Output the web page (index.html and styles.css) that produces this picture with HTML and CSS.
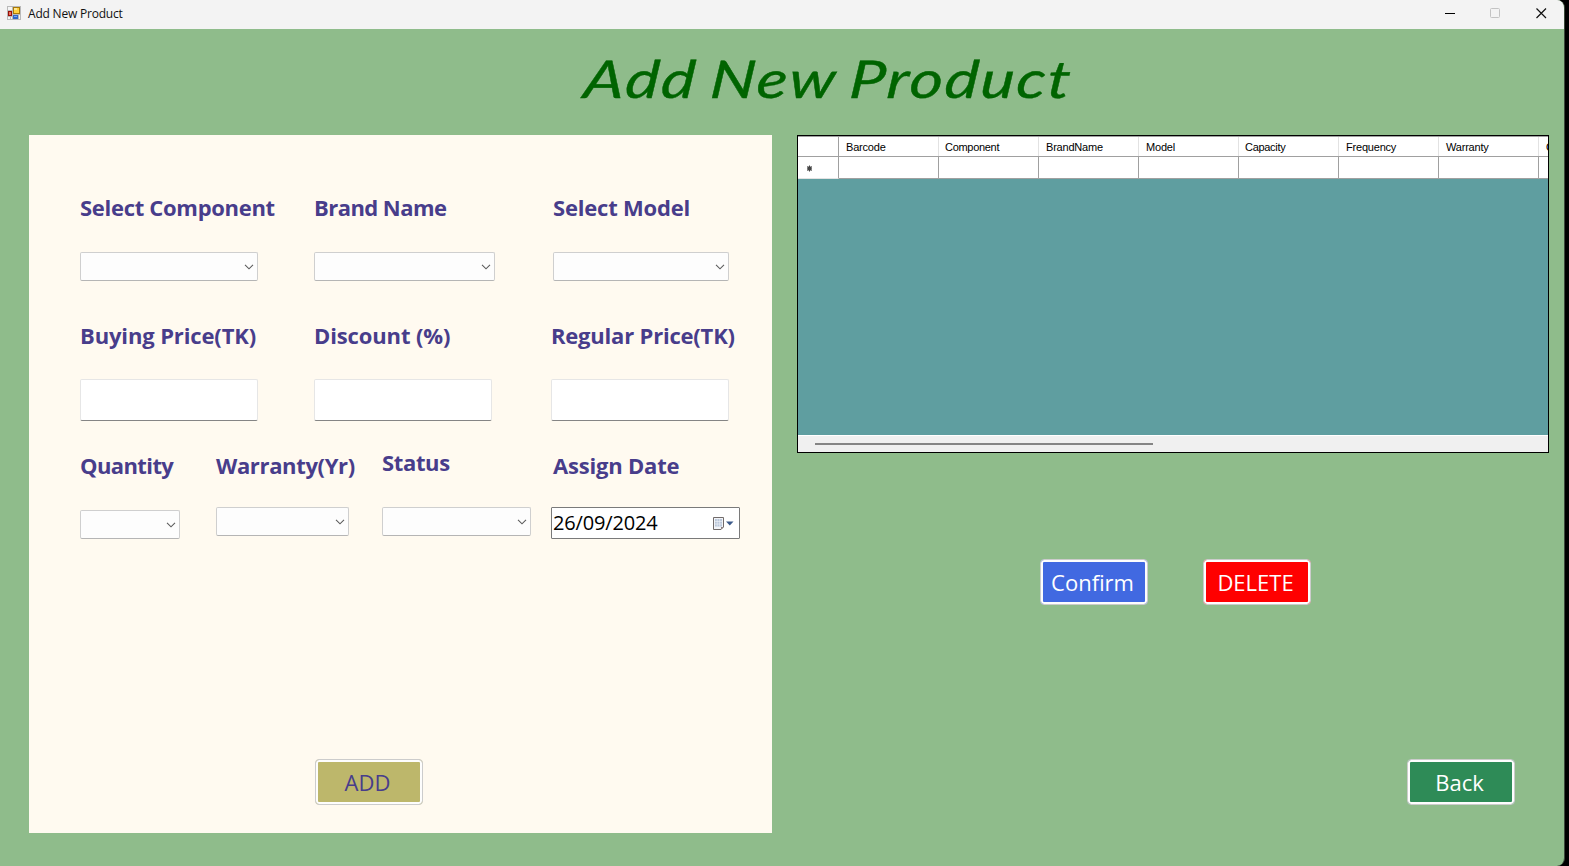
FILE: index.html
```
<!DOCTYPE html>
<html lang="en">
<head>
<meta charset="utf-8">
<title>Add New Product</title>
<link rel="stylesheet" href="styles.css">
</head>
<body>
<svg class="defs" width="0" height="0"><symbol id="chevron" viewBox="0 0 10 6"><path d="M1 .8l4 4 4-4" fill="none" stroke="#5c5c5c" stroke-width="1.1"/></symbol></svg>
<div class="window">
  <header class="titlebar">
    <svg class="app-icon" width="14" height="14" viewBox="0 0 14 14">
      <path fill="#b9b9b9" d="M0 0h14v14H0z"/><path fill="#f4f4f4" d="M1 1h4v3H1zM1 11h2v2H1zM4 11h1v2H4zM12 9h1v4h-1z"/>
      <path fill="#a97908" d="M6 1h7v7H6z"/><path fill="#ffd23e" d="M7 2h5v5H7z"/><path fill="#ffe795" d="M7 2h3v2H7z"/>
      <path fill="#971008" d="M1 5h4v5H1z"/><path fill="#ee7059" d="M2 6h2v3H2z"/>
      <path fill="#2e66c6" d="M6 9h5v4H6z"/><path fill="#77a8f5" d="M7 10h3v1H7z"/>
    </svg>
    <span class="caption">Add New Product</span>
    <svg class="controls" width="106" height="14" viewBox="0 0 106 14" fill="none">
      <path d="M0 7.5h10" stroke="#000"/>
      <rect x="45.500" y="2.500" width="9" height="9" rx="1" stroke="#c3c3c3"/>
      <path d="M91.500 2.500l9.500 9.500M101 2.500l-9.500 9.500" stroke="#111" stroke-width="1.200"/>
    </svg>
  </header>
  <h1 class="heading"><span>Add New Product</span></h1>
  <main class="content">
    <form class="panel">
      <div class="row row-1">
        <div class="field"><label class="component">Select Component</label><div class="combo c178"><svg><use href="#chevron"/></svg></div></div>
        <div class="field"><label class="brand">Brand Name</label><div class="combo c181"><svg><use href="#chevron"/></svg></div></div>
        <div class="field"><label class="model">Select Model</label><div class="combo c176"><svg><use href="#chevron"/></svg></div></div>
      </div>
      <div class="row row-2">
        <div class="field"><label class="buying">Buying Price(TK)</label><div class="textbox"></div></div>
        <div class="field"><label class="discount">Discount (%)</label><div class="textbox"></div></div>
        <div class="field"><label class="regular">Regular Price(TK)</label><div class="textbox"></div></div>
      </div>
      <div class="row row-3">
        <div class="field quantity"><label>Quantity</label><div class="combo c100"><svg><use href="#chevron"/></svg></div></div>
        <div class="field warranty"><label>Warranty(Yr)</label><div class="combo c133"><svg><use href="#chevron"/></svg></div></div>
        <div class="field status"><label>Status</label><div class="combo c149"><svg><use href="#chevron"/></svg></div></div>
        <div class="field date"><label>Assign Date</label>
          <div class="datepicker"><span>26/09/2024</span>
            <svg width="21" height="13" viewBox="0 0 21 13"><path d="M.5 .5h10v9.500l-2.500 2.500H.5z" fill="#f2f4f8" stroke="#716b6b"/><path d="M2 2h7v7.500H2z" fill="#b9c7da"/><path d="M4.200 2v7.500M6.700 2v7.500M2 4.500h7M2 7h7" stroke="#f2f4f8" stroke-width=".6"/><path d="M8 12.500V10h2.500z" fill="#8b7f7f"/><path d="M13 4.500h7.500l-3.700 4z" fill="#3c5a8a"/></svg>
          </div></div>
      </div>
      <button type="button" class="btn add">ADD</button>
    </form>
    <section class="side">
      <div class="datagrid">
        <div class="cells head"><span></span><span>Barcode</span><span class="snug">Component</span><span>BrandName</span><span>Model</span><span class="snug">Capacity</span><span>Frequency</span><span>Warranty</span><span>Quantity</span></div>
        <div class="cells new"><span><svg width="7" height="7" viewBox="0 0 7 7"><path d="M3.500 .5v6M1 1.500l5 4M6 1.500l-5 4" stroke="#444"/><circle cx="3.500" cy="3.500" r="2.200" fill="#444"/></svg></span><span></span><span></span><span></span><span></span><span></span><span></span><span></span><span></span></div>
        <div class="scrollbar"><div class="thumb"></div></div>
      </div>
      <div class="actions"><button type="button" class="btn confirm">Confirm</button><button type="button" class="btn delete">DELETE</button></div>
      <button type="button" class="btn back">Back</button>
    </section>
  </main>
</div>
</body>
</html>
```
FILE: styles.css
```
* { box-sizing: border-box; }
body { margin: 0; background: #000; font-family: "Open Sans", "Noto Sans", sans-serif; }
.defs { position: absolute; }
.window { width: 1565px; height: 866px; background: #8fbc8b; border-radius: 0 8px 8px 0; border-right: 1px solid #3c4a3b; overflow: hidden; display: flex; flex-direction: column; }
.titlebar { flex: none; height: 29px; background: #f3f3f3; display: flex; align-items: center; padding: 0 13px 3px 7px; }
.caption { margin-left: 7px; padding-top: 2px; font-size: 12px; line-height: 20px; letter-spacing: -.2px; color: #111; }
.controls { margin-left: auto; }
.heading { flex: none; height: 106px; margin: 0; padding: 11px 0 0 583px; font: italic 400 52px/76px Lato, sans-serif; color: #006400; white-space: nowrap; letter-spacing: 1.6px; word-spacing: -3px; }
.heading span { display: inline-block; transform: scaleX(1.23) skewX(-4deg); transform-origin: 0 70%; -webkit-text-stroke: .4px #006400; }
.content { flex: 1; display: flex; padding: 0 15px 33px 29px; gap: 25px; }
.panel { width: 743px; height: 698px; background: #fffaf0; padding: 58px 0 0 51px; }
.row { display: grid; }
.row-1 { grid-template-columns: 234px 239px auto; height: 128px; }
.row-2 { grid-template-columns: 234px 237px auto; height: 130px; }
.row-3 { grid-template-columns: 136px 166px 169px auto; height: 308px; }
label { display: block; height: 59px; font-size: 22px; font-weight: 700; line-height: 29px; letter-spacing: -.2px; color: #483d8b; white-space: nowrap; }
.row-2 label { height: 58px; }
.row-3 label { height: 56px; }
.component { letter-spacing: -.3px; }
.brand { letter-spacing: -.55px; }
.buying, .discount { letter-spacing: -.13px; }
.row-3 .quantity label { height: 59px; letter-spacing: -.6px; }
.warranty label, .status label { letter-spacing: -.35px; }
.status label { line-height: 23px; }
.date label { padding-left: 2px; }
.combo { height: 29px; border: 1px solid #cfcfcf; border-bottom-color: #b5b5b5; border-radius: 2px; background: #fdfdfd; display: flex; align-items: center; justify-content: flex-end; padding-right: 3px; }
.combo svg { width: 10px; height: 6px; }
.c178 { width: 178px; }
.c181 { width: 181px; }
.c176 { width: 176px; }
.c100 { width: 100px; }
.c133 { width: 133px; }
.c149 { width: 149px; }
.textbox { width: 178px; height: 42px; background: #fff; border: 1px solid #e6e6e6; border-bottom-color: #858585; border-radius: 2px; }
.datepicker { width: 189px; height: 32px; border: 1px solid #7a7a7a; border-radius: 1px; background: #fff; display: flex; align-items: center; justify-content: space-between; padding: 0 5px 0 1px; font-size: 20px; line-height: 28px; letter-spacing: -.15px; color: #000; }
.btn { display: flex; align-items: center; justify-content: center; width: 108px; height: 46px; padding: 0 3px 1px 0; border: 1px solid #ccc; border-radius: 4px; box-shadow: inset 0 0 0 2px #fdfdfd; font: 500 22px/30px "Open Sans", sans-serif; color: #fff; }
.add { margin-left: 235px; background: #bdb76b; color: #483d8b; }
.side { width: 752px; }
.datagrid { height: 318px; border: 1px solid #000; background: #5f9ea0; display: flex; flex-direction: column; overflow: hidden; }
.cells { display: grid; flex: none; grid-template-columns: 41px repeat(7, 100px) 9px; background: #fff; }
.head { height: 21px; border-top: 1px solid #a0a0a0; border-bottom: 1px solid #a0a0a0; font: 11px/20px "Liberation Sans", sans-serif; color: #000; letter-spacing: -.2px; }
.head span { padding-left: 7px; border-right: 1px solid #e2e2e2; white-space: nowrap; overflow: hidden; }
.head .snug { padding-left: 6px; letter-spacing: -.3px; }
.head > span:first-child { border-right-color: #a0a0a0; }
.head > span:last-child, .new > span:last-child { border-right: 0; }
.new { height: 22px; }
.new > span { border-right: 1px solid #a0a0a0; border-bottom: 1px solid #a0a0a0; }
.new > span:first-child { padding: 8px 0 0 8px; line-height: 0; border-bottom-color: #e2e2e2; }
.scrollbar { margin-top: auto; flex: none; height: 17px; background: #f0f0f0; border-top: 1px solid #fff; padding: 7px 0 0 17px; }
.thumb { width: 338px; height: 2px; background: #858585; }
.actions { display: flex; gap: 55px; padding: 106px 0 0 243px; }
.confirm { background: #4169e1; }
.delete { background: #f00; }
.back { margin: 154px 0 0 610px; background: #2e8b57; }
```
